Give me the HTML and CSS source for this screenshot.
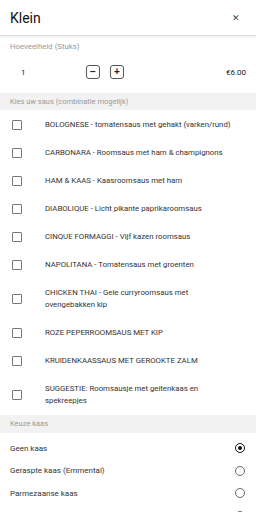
FILE: index.html
```html
<!DOCTYPE html>
<html lang="nl">
<head>
    <meta charset="UTF-8">
    <meta name="viewport" content="width=device-width, initial-scale=1.0">
    <title>Klein</title>
    <link rel="stylesheet" href="styles.css">
</head>
<body>

    <div class="header">
        <h2>Klein</h2>
        <span class="close">&#x2715;</span>
    </div>

    <div class="quantity">
        <div class="label">Hoeveelheid (Stuks)</div>
        <div class="qty-row">
            <span class="count">1</span>
            <div class="buttons">
                <button class="step">&minus;</button>
                <button class="step">+</button>
            </div>
            <span class="price">€6.00</span>
        </div>
    </div>

    <div class="section">Kies uw saus (combinatie mogelijk)</div>
    <ul class="checks">
        <li><span class="box"></span><span>BOLOGNESE - tomatensaus met gehakt (varken/rund)</span></li>
        <li><span class="box"></span><span>CARBONARA - Roomsaus met ham &amp; champignons</span></li>
        <li><span class="box"></span><span>HAM &amp; KAAS - Kaasroomsaus met ham</span></li>
        <li><span class="box"></span><span>DIABOLIQUE - Licht pikante paprikaroomsaus</span></li>
        <li><span class="box"></span><span>CINQUE FORMAGGI - Vijf kazen roomsaus</span></li>
        <li><span class="box"></span><span>NAPOLITANA - Tomatensaus met groenten</span></li>
        <li><span class="box"></span><span class="two">CHICKEN THAI - Gele curryroomsaus met ovengebakken kip</span></li>
        <li><span class="box"></span><span>ROZE PEPERROOMSAUS MET KIP</span></li>
        <li><span class="box"></span><span>KRUIDENKAASSAUS MET GEROOKTE ZALM</span></li>
        <li><span class="box"></span><span class="two">SUGGESTIE: Roomsausje met geitenkaas en spekreepjes</span></li>
    </ul>

    <div class="section tall">Keuze kaas</div>
    <ul class="radios">
        <li><span>Geen kaas</span><span class="radio checked"></span></li>
        <li><span>Geraspte kaas (Emmental)</span><span class="radio"></span></li>
        <li><span>Parmezaanse kaas</span><span class="radio"></span></li>
        <li><span>Geraspte mozzarella</span><span class="radio"></span></li>
    </ul>

</body>
</html>
```

FILE: styles.css
```css
body {
    font-family: Roboto, "Liberation Sans", sans-serif;
    background: #fff;
    color: #333;
    margin: 0;
    padding: 0;
    overflow: hidden;
}
.header {
    height: 35px;
    display: flex;
    align-items: center;
    justify-content: space-between;
    padding: 0 10px;
    border-bottom: 1px solid #ddd;
    box-shadow: 0 1px 2px rgba(0, 0, 0, 0.08);
}
.header h2 {
    margin: 0;
    font-size: 14px;
    font-weight: 400;
    color: #111;
}
.close {
    font-size: 9px;
    color: #444;
    margin-right: 6px;
}
.quantity {
    padding: 6px 10px 0;
    height: 51px;
}
.label {
    font-size: 7.8px;
    color: #999;
    line-height: 10px;
}
.qty-row {
    display: flex;
    align-items: center;
    height: 40px;
}
.count {
    font-size: 8px;
    color: #222;
    width: 65px;
    padding-left: 11px;
}
.buttons {
    display: flex;
    gap: 10px;
}
.step {
    width: 14px;
    height: 14px;
    padding: 0;
    border: 1px solid #555;
    border-radius: 3px;
    background: #fff;
    font-size: 10px;
    font-weight: bold;
    line-height: 10px;
    color: #222;
}
.price {
    margin-left: auto;
    font-size: 8px;
    color: #222;
}
.section {
    background: #f2f2f2;
    height: 17px;
    line-height: 17px;
    padding: 0 10px;
    font-size: 7.5px;
    color: #999;
}
.section.tall {
    height: 18px;
    line-height: 18px;
}
ul {
    list-style: none;
    margin: 0;
    padding: 0;
}
.checks li {
    display: flex;
    align-items: center;
    padding: 8px 10px 8px 12px;
    font-size: 7.8px;
    line-height: 12px;
    color: #333;
}
.checks li:first-child {
    padding-top: 9px;
}
.checks .two {
    max-width: 170px;
}
.box {
    flex: none;
    width: 8px;
    height: 8px;
    border: 1px solid #777;
    border-radius: 1px;
    margin-right: 23px;
}
.radios {
    padding-top: 4px;
}
.radios li {
    display: flex;
    align-items: center;
    justify-content: space-between;
    height: 22.5px;
    padding: 0 11px 0 10px;
    font-size: 8px;
    color: #333;
}
.radio {
    width: 8px;
    height: 8px;
    border: 1px solid #666;
    border-radius: 50%;
    position: relative;
}
.radio.checked {
    border-color: #111;
}
.radio.checked::after {
    content: "";
    position: absolute;
    top: 2px;
    left: 2px;
    width: 4px;
    height: 4px;
    border-radius: 50%;
    background: #111;
}
```
